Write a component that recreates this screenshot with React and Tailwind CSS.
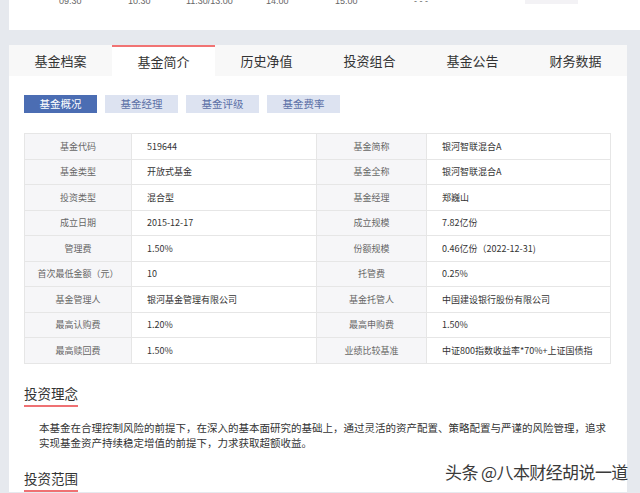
import React from 'react';

const tabs = ['基金档案', '基金简介', '历史净值', '投资组合', '基金公告', '财务数据'];
const subTabs = ['基金概况', '基金经理', '基金评级', '基金费率'];

// axis labels of the chart above, with the width each one takes up to the next
const times = [
  ['09:30', 'w-[69px]'],
  ['10:30', 'w-[58px]'],
  ['11:30/13:00', 'w-[80px]'],
  ['14:00', 'w-[69px]'],
  ['15:00', 'w-[79px]'],
  ['- - -', 'w-[111px]'],
];

const rows = [
  ['基金代码', '519644', '基金简称', '银河智联混合A'],
  ['基金类型', '开放式基金', '基金全称', '银河智联混合A'],
  ['投资类型', '混合型', '基金经理', '郑巍山'],
  ['成立日期', '2015-12-17', '成立规模', '7.82亿份'],
  ['管理费', '1.50%', '份额规模', '0.46亿份（2022-12-31)'],
  ['首次最低金额（元）', '10', '托管费', '0.25%'],
  ['基金管理人', '银河基金管理有限公司', '基金托管人', '中国建设银行股份有限公司'],
  ['最高认购费', '1.20%', '最高申购费', '1.50%'],
  ['最高赎回费', '1.50%', '业绩比较基准', '中证800指数收益率*70%+上证国债指'],
];

const font = { fontFamily: '"Noto Sans CJK SC", "Liberation Sans", sans-serif' };

const Cell = ({ children, label, last }) => (
  <div
    className={`h-[24.5px] flex items-center border-[#e6e6e6] text-[9px] ${last ? '' : 'border-r'} ${
      label ? 'justify-center bg-[#f6f6f8] text-[#666]' : 'pl-[15px] bg-white text-[#333] whitespace-nowrap overflow-hidden'
    }`}
  >
    {children}
  </div>
);

const Heading = ({ children }) => (
  <h3 className="self-start text-[13.5px] text-[#333] leading-[18px] pb-[3px] border-b-2 border-[#ef7173]">
    {children}
  </h3>
);

export default function App() {
  return (
    <div className="w-[640px] h-[493px] bg-[#e6e9ee] overflow-hidden relative" style={font}>
      {/* top chart panel (cut off) */}
      <div className="ml-[9px] h-[30px] bg-white overflow-hidden">
        <div
          className="flex items-start pl-[50px] -mt-[5px] text-[9px] leading-[12px] text-[#666]"
          style={{ fontFamily: '"Liberation Sans", sans-serif' }}
        >
          {times.map(([t, w]) => (
            <span key={t} className={`${w} shrink-0`}>
              {t}
            </span>
          ))}
          <div className="mt-[5px] w-[53px] h-[4px] bg-[#f3f2f5] shrink-0" />
        </div>
      </div>

      <div className="ml-[9px] mt-[15px] w-[618px] bg-white flex flex-col">
        {/* main tabs */}
        <div className="flex h-[31px] bg-[#f8f8f8]">
          {tabs.map((t, i) => (
            <div
              key={t}
              className={`flex-1 flex items-center justify-center text-[13px] text-[#333] ${
                i === 1 ? 'bg-white border-t-2 border-[#f17373]' : ''
              }`}
            >
              {t}
            </div>
          ))}
        </div>

        <div className="flex flex-col px-[15px]">
          {/* sub tabs */}
          <div className="flex gap-[8px] pt-[19px]">
            {subTabs.map((t, i) => (
              <div
                key={t}
                className={`w-[73px] h-[18px] flex items-center justify-center text-[10.5px] ${
                  i === 0 ? 'bg-[#4b6db3] text-white' : 'bg-[#dde3f1] text-[#5b6fa6]'
                }`}
              >
                {t}
              </div>
            ))}
          </div>

          {/* table */}
          <div className="mt-[20px] w-[587px] border border-[#e6e6e6]">
            {rows.map((r, i) => (
              <div
                key={i}
                className={`grid grid-cols-[107px_185px_110px_1fr] ${i < rows.length - 1 ? 'border-b border-[#e6e6e6]' : ''}`}
              >
                <Cell label>{r[0]}</Cell>
                <Cell>{r[1]}</Cell>
                <Cell label>{r[2]}</Cell>
                <Cell last>{r[3]}</Cell>
              </div>
            ))}
          </div>

          {/* 投资理念 */}
          <div className="mt-[20px] flex flex-col">
            <Heading>投资理念</Heading>
          </div>
          <p className="mt-[13px] pl-[15px] pr-[3px] text-[10.5px] leading-[15px] text-[#333]">
            本基金在合理控制风险的前提下，在深入的基本面研究的基础上，通过灵活的资产配置、策略配置与严谨的风险管理，追求实现基金资产持续稳定增值的前提下，力求获取超额收益。
          </p>

          {/* 投资范围 */}
          <div className="mt-[19px] flex flex-col">
            <Heading>投资范围</Heading>
          </div>
        </div>
      </div>

      {/* watermark */}
      <div
        className="absolute left-[445px] top-[461px] text-[17px] leading-[22px] text-[#3a3a3a] tracking-[-0.6px] whitespace-nowrap"
        style={{ textShadow: '0 0 2px #fff, 0 0 2px #fff' }}
      >
        头条 @八本财经胡说一道
      </div>
    </div>
  );
}
